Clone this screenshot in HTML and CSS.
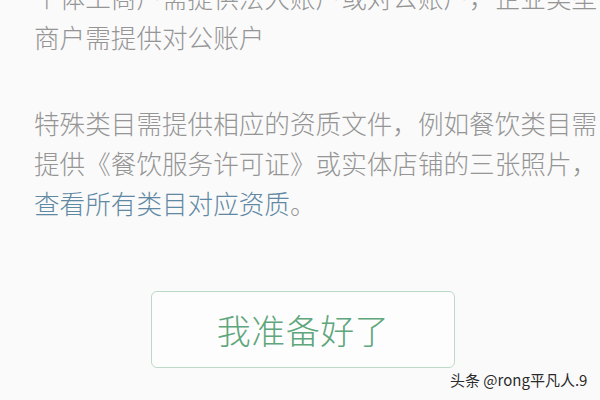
FILE: index.html
```html
<!DOCTYPE html>
<html lang="zh-CN">
<head>
<meta charset="utf-8">
<link rel="stylesheet" href="styles.css">
</head>
<body>
<main class="page">
  <p class="para first">个体工商户需提供法人账户或对公账户，企业类型<br>商户需提供对公账户</p>
  <p class="para second">特殊类目需提供相应的资质文件，例如餐饮类目需<br>提供《餐饮服务许可证》或实体店铺的三张照片，<br><span class="link">查看所有类目对应资质</span>。</p>
  <button class="ready">我准备好了</button>
</main>
<div class="watermark">头条 @rong平凡人.9</div>
</body>
</html>
```
FILE: styles.css
```css
html, body {
  margin: 0;
  padding: 0;
  width: 600px;
  height: 400px;
  overflow: hidden;
  background: #fafafa;
  font-family: "Noto Sans CJK SC", "Noto Sans", sans-serif;
}
.page {
  padding-left: 34px;
}
.para {
  margin: 0;
  font-size: 25.6px;
  font-weight: 300;
  line-height: 40px;
  color: #959595;
  white-space: nowrap;
}
.first {
  margin-top: -23px;
}
.second {
  margin-top: 46px;
}
.link {
  color: #5f88a3;
}
.ready {
  display: block;
  margin: 68px 0 0 117px;
  width: 304px;
  height: 77px;
  box-sizing: border-box;
  border: 1.5px solid #bcdac7;
  border-radius: 6px;
  background: #fdfdfd;
  color: #5ea67c;
  font-family: "Noto Sans CJK SC", "Noto Sans", sans-serif;
  font-size: 34px;
  font-weight: 300;
  padding: 0;
  letter-spacing: 0.5px;
}
.watermark {
  position: absolute;
  left: 450px;
  top: 370px;
  font-size: 15px;
  line-height: 20px;
  color: #2a2a2a;
  text-shadow: 0 0 2px #fff, 0 0 1px #fff;
  font-family: "Noto Sans CJK SC", "Noto Sans", sans-serif;
}
```
